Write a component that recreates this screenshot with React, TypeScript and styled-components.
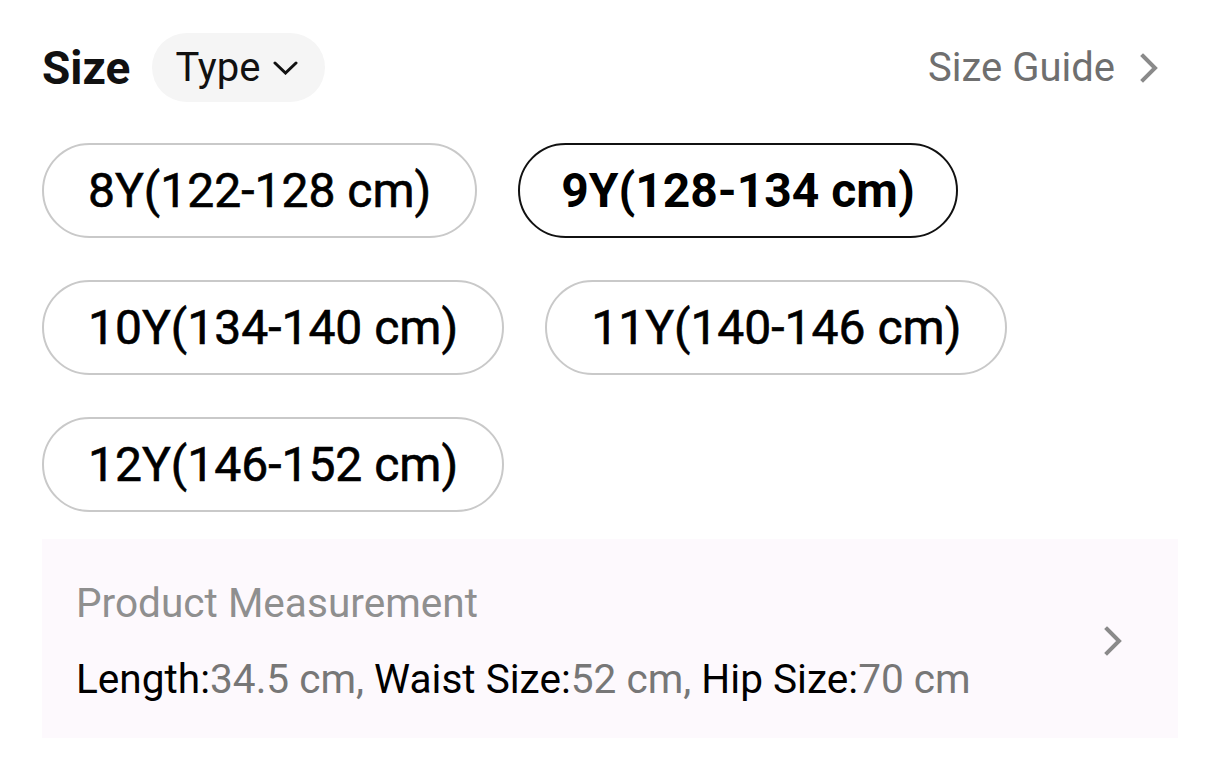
import React from "react";
import styled, { createGlobalStyle } from "styled-components";

const GlobalStyle = createGlobalStyle`
  html, body {
    margin: 0;
    padding: 0;
    background: #ffffff;
  }
  body {
    font-family: Roboto, "Liberation Sans", Arial, sans-serif;
    color: #000;
  }
`;

const Page = styled.div`
  box-sizing: border-box;
  width: 1216px;
  height: 768px;
  padding: 33px 38px 0 42px;
  display: flex;
  flex-direction: column;
`;

const Header = styled.div`
  display: flex;
  align-items: center;
  justify-content: space-between;
  height: 69px;
`;

const HeaderLeft = styled.div`
  display: flex;
  align-items: center;
  gap: 22px;
`;

const Title = styled.span`
  font-size: 46px;
  font-weight: 700;
  color: #111;
  line-height: 1;
`;

const TypePill = styled.button`
  box-sizing: border-box;
  height: 69px;
  padding: 0 27px 0 23px;
  border: none;
  border-radius: 35px;
  background: #f5f5f5;
  display: flex;
  align-items: center;
  gap: 13px;
  font-family: inherit;
  font-size: 40px;
  font-weight: 400;
  color: #111;
  cursor: pointer;
`;

const GuideLink = styled.a`
  display: flex;
  align-items: center;
  gap: 25px;
  padding-right: 19px;
  font-size: 40px;
  color: #6f6f6f;
  text-decoration: none;
`;

const ChipRows = styled.div`
  display: flex;
  flex-direction: column;
  gap: 42px;
  margin-top: 41px;
`;

const ChipRow = styled.div`
  display: flex;
  gap: 41px;
`;

const Chip = styled.button<{ $selected?: boolean }>`
  box-sizing: border-box;
  height: 95px;
  padding: 0 ${(p) => (p.$selected ? "41px" : "44px")};
  border-radius: 48px;
  border: 2px solid ${(p) => (p.$selected ? "#111" : "#c9c9c9")};
  background: #fff;
  display: flex;
  align-items: center;
  justify-content: center;
  font-family: inherit;
  font-size: 48px;
  font-weight: ${(p) => (p.$selected ? 700 : 400)};
  -webkit-text-stroke: ${(p) => (p.$selected ? "0" : "0.6px #000")};
  color: #000;
  white-space: nowrap;
  cursor: pointer;
`;

const MeasureBox = styled.div`
  box-sizing: border-box;
  margin-top: 27px;
  height: 199px;
  background: #fdf9fd;
  padding: 40px 55px 35px 34px;
  display: flex;
  align-items: center;
  justify-content: space-between;
`;

const MeasureText = styled.div`
  display: flex;
  flex-direction: column;
  gap: 28px;
`;

const MeasureTitle = styled.div`
  font-size: 40.6px;
  line-height: 48px;
  color: #8f8f8f;
`;

const MeasureLine = styled.div`
  font-size: 40.6px;
  line-height: 48px;
  color: #000;
  white-space: nowrap;
`;

const Value = styled.span`
  color: #777;
`;

const ChevronRight = ({ color, stroke }: { color: string; stroke: number }) => (
  <svg width="19" height="30" viewBox="0 0 19 30" fill="none">
    <path d="M3 3 L15 15 L3 27" stroke={color} strokeWidth={stroke} strokeLinecap="square" strokeLinejoin="miter" />
  </svg>
);

const ChevronDown = () => (
  <svg width="25" height="14" viewBox="0 0 25 14" fill="none">
    <path d="M2 2 L12.5 12 L23 2" stroke="#111" strokeWidth="3" strokeLinecap="round" strokeLinejoin="miter" />
  </svg>
);

const rows = [
  [{ label: "8Y(122-128 cm)" }, { label: "9Y(128-134 cm)", selected: true }],
  [{ label: "10Y(134-140 cm)" }, { label: "11Y(140-146 cm)" }],
  [{ label: "12Y(146-152 cm)" }],
];

export default function App() {
  return (
    <>
      <GlobalStyle />
      <Page>
        <Header>
          <HeaderLeft>
            <Title>Size</Title>
            <TypePill>
              Type
              <ChevronDown />
            </TypePill>
          </HeaderLeft>
          <GuideLink href="#">
            Size Guide
            <ChevronRight color="#8a8a8a" stroke={4} />
          </GuideLink>
        </Header>
        <ChipRows>
          {rows.map((row, ri) => (
            <ChipRow key={ri}>
              {row.map((s) => (
                <Chip key={s.label} $selected={"selected" in s ? s.selected : false}>
                  {s.label}
                </Chip>
              ))}
            </ChipRow>
          ))}
        </ChipRows>
        <MeasureBox>
          <MeasureText>
            <MeasureTitle>Product Measurement</MeasureTitle>
            <MeasureLine>
              Length:<Value>34.5 cm, </Value>Waist Size:<Value>52 cm, </Value>Hip Size:<Value>70 cm</Value>
            </MeasureLine>
          </MeasureText>
          <ChevronRight color="#8a8a8a" stroke={4} />
        </MeasureBox>
      </Page>
    </>
  );
}
